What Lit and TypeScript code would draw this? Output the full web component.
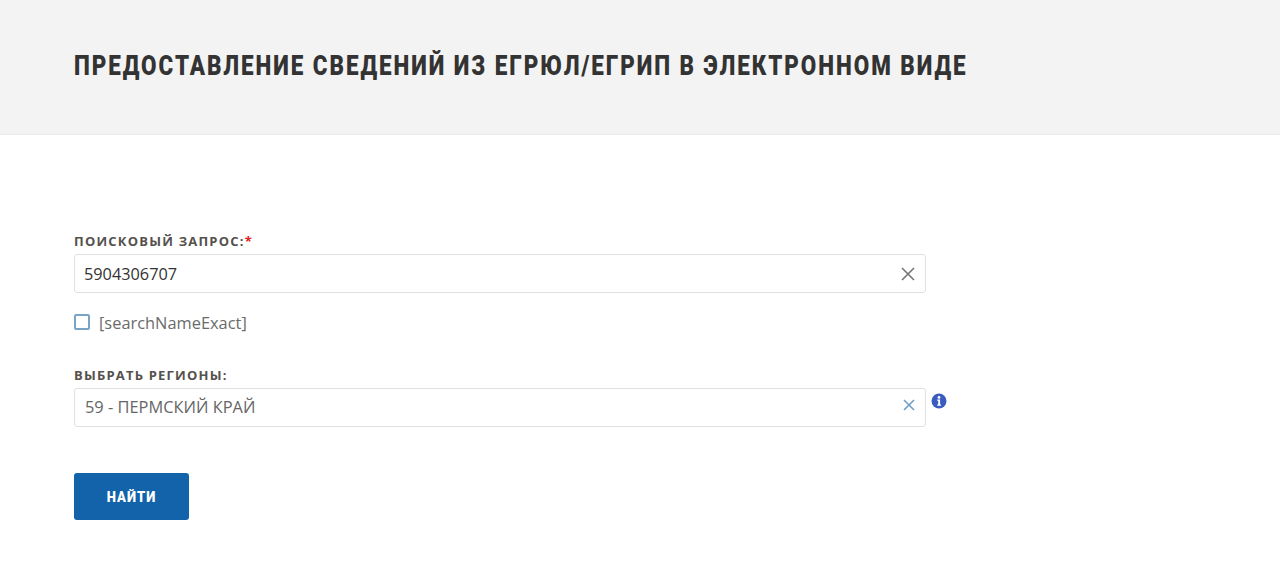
import { LitElement, html, css } from "lit";
import { customElement } from "lit/decorators.js";

@customElement("app-root")
export class AppRoot extends LitElement {
  static styles = css`
    :host { display: block; background: #fff; height: 580px; overflow: hidden; font-family: "Open Sans", sans-serif; color: #55514c; }
    .head { height: 135px; box-sizing: border-box; background: #f3f3f3; border-bottom: 1px solid #ebebeb; padding: 48px 74px 0; }
    h1 { margin: 0; font: 900 27px/36px "Roboto", sans-serif; letter-spacing: 2.36px; color: #333333; text-transform: uppercase; white-space: nowrap; transform: scaleX(0.83); transform-origin: left center; }
    main { padding: 98px 0 0 74px; }
    label.cap { display: block; font-size: 13px; line-height: 16px; font-weight: 700; letter-spacing: 1.2px; color: #55514c; text-transform: uppercase; }
    .req { color: #e02020; }
    .row { display: flex; align-items: flex-start; margin-top: 5px; }
    .field { width: 852px; height: 39px; box-sizing: border-box; border: 1px solid #e1e1e1; border-radius: 3px; display: flex; align-items: center; justify-content: space-between; background: #fff; font-size: 16.3px; }
    .v1 { padding-left: 9px; color: #333; }
    .v2 { padding: 0 0 2px 10px; color: #666; font-size: 16.4px; }
    .x1 { display: block; margin-right: 9px; }
    .x2 { display: block; margin: 0 10px 6px 0; }
    .check { display: flex; align-items: center; gap: 9px; margin-top: 19px; height: 20px; font-size: 16.4px; color: #6b6b6b; }
    .box { width: 16px; height: 16px; box-sizing: border-box; border: 2px solid #7ba3c4; border-radius: 2px; background: #fff; }
    .second { margin-top: 35px; }
    .info { margin: 5px 0 0 5px; display: block; }
    button { display: block; margin-top: 46px; width: 115px; height: 47px; border: 0; border-radius: 3px; background: #1263a9; color: #fff; font: 900 15px "Roboto", sans-serif; letter-spacing: 1.2px; text-transform: uppercase; padding: 0; }
    button span { display: block; transform: scaleX(0.87); }
  `;

  render() {
    return html`
      <div class="head"><h1>Предоставление сведений из ЕГРЮЛ/ЕГРИП в электронном виде</h1></div>
      <main>
        <label class="cap">Поисковый запрос:<span class="req">*</span></label>
        <div class="row">
          <div class="field">
            <span class="v1">5904306707</span>
            <svg class="x1" width="16" height="16" viewBox="0 0 16 16" fill="none" stroke="#757575" stroke-width="1.6"><path d="M2 2l12 12M14 2L2 14"/></svg>
          </div>
        </div>
        <div class="check"><span class="box"></span><span>[searchNameExact]</span></div>
        <div class="second">
          <label class="cap">Выбрать регионы:</label>
          <div class="row">
            <div class="field">
              <span class="v2">59 - ПЕРМСКИЙ КРАЙ</span>
              <svg class="x2" width="12" height="12" viewBox="0 0 12 12" fill="none" stroke="#6f9fc4" stroke-width="1.6"><path d="M1 1l10 10M11 1L1 11"/></svg>
            </div>
            <svg class="info" width="16" height="16" viewBox="0 0 16 16"><circle cx="8" cy="8" r="7.5" fill="#3a5bbf"/><circle cx="8" cy="4.4" r="1.4" fill="#fff"/><path d="M6.2 6.6h2.9v5h1v1.2H6.2v-1.2h1v-3.8h-1z" fill="#fff"/></svg>
          </div>
        </div>
        <button><span>Найти</span></button>
      </main>
    `;
  }
}
